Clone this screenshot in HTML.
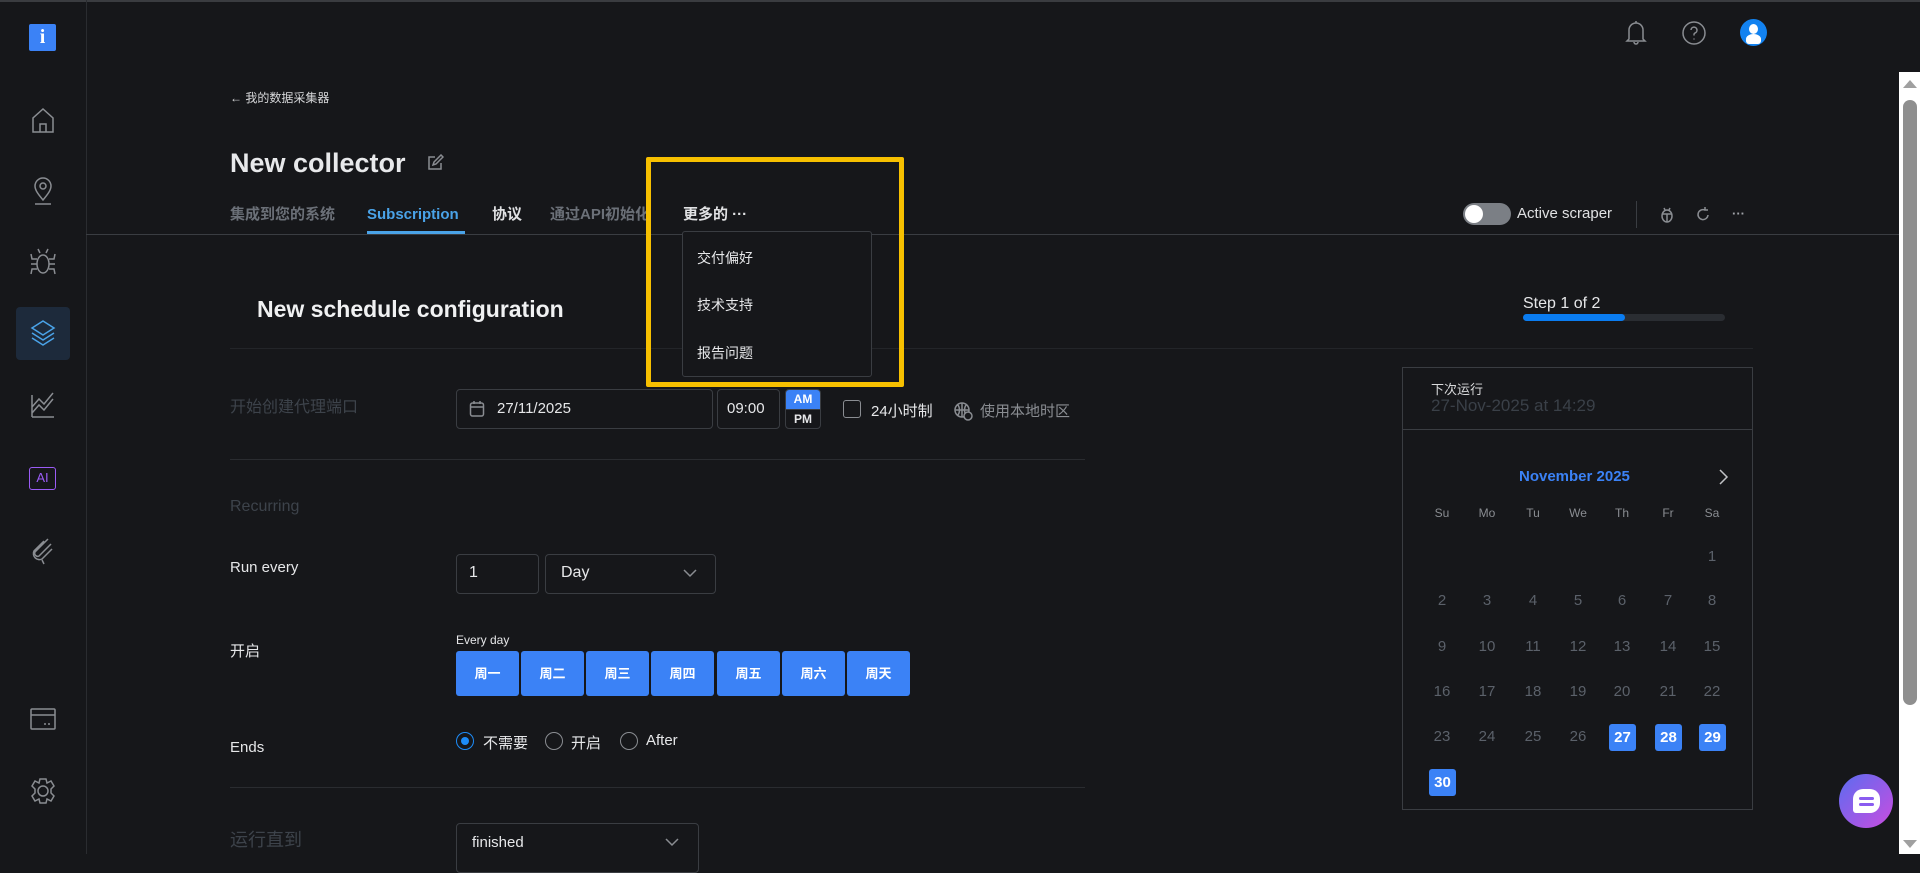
<!DOCTYPE html>
<html><head><meta charset="utf-8"><style>
*{margin:0;padding:0;box-sizing:border-box}
body{width:1920px;height:854px;background:#16171a;overflow:hidden;position:relative;font-family:"Liberation Sans","Noto Sans CJK SC",sans-serif;color:#e6e7e9}
.a{position:absolute;white-space:nowrap}
.dim{color:#3d434b}
.tab{position:absolute;top:204px;font-size:15px;font-weight:bold;line-height:22px;height:22px;white-space:nowrap}
.box{position:absolute;border:1px solid #3a3d42;border-radius:4px}
.ic{position:absolute;fill:none;stroke:#8a8d92;stroke-width:1.5}
.day{position:absolute;top:651px;width:63px;height:45px;background:#3b82f6;border-radius:3px;color:#fff;font-size:13px;font-weight:bold;text-align:center;line-height:45px}
.cn{position:absolute;width:40px;text-align:center;font-size:15px;color:#5b616a;transform:translate(-20px,-9px)}
.sel{position:absolute;width:27px;height:27px;background:#3b82f6;border-radius:3px;color:#fff;font-weight:bold;font-size:15px;text-align:center;line-height:27px;transform:translate(-13px,-13px)}
.radio{position:absolute;width:18px;height:18px;border:1px solid #8a8d92;border-radius:50%;top:732px}
</style></head><body>
<div class="a" style="left:0;top:0;width:1920px;height:2px;background:#3a3c40"></div>
<div class="a" style="left:86px;top:0;width:1px;height:854px;background:#2a2c30"></div>
<div class="a" style="left:29px;top:24px;width:27px;height:27px;background:#3b82f6;border-radius:2px;color:#fff;font:bold 20px 'Liberation Serif',serif;text-align:center;line-height:27px">i</div>
<svg class="ic" style="left:29px;top:106px" width="28" height="28" viewBox="0 0 28 28"><path d="M4 26V12L14 3l10 9v14zM11 26v-8h6v8"/></svg>
<svg class="ic" style="left:30px;top:176px" width="26" height="30" viewBox="0 0 26 30"><path d="M13 24c-5-6-8-10-8-14a8 8 0 0 1 16 0c0 4-3 8-8 14z"/><circle cx="13" cy="10" r="3"/><path d="M5 28h16"/></svg>
<svg class="ic" style="left:29px;top:247px" width="28" height="30" viewBox="0 0 28 30"><ellipse cx="14" cy="17" rx="6" ry="9"/><path d="M8 12H3L2 7M8 17H2M8 22H3l-1 5M20 12h5l1-5M20 17h6M20 22h5l1 5M11 6 9 2M17 6l2-4"/></svg>
<div class="a" style="left:16px;top:307px;width:54px;height:53px;background:#1d2a3b;border-radius:4px"></div>
<svg class="ic" style="left:29px;top:318px;stroke:#4aa3e8" width="28" height="32" viewBox="0 0 28 32"><path d="M14 3 3 10l11 7 11-7zM3 15l11 7 11-7M3 20l11 7 11-7"/></svg>
<svg class="ic" style="left:30px;top:391px" width="26" height="28" viewBox="0 0 26 28"><path d="M2 26h22M2 22l7-8 5 5 9-11M2 16l7-8 5 5 9-11M2 4v22"/></svg>
<div class="a" style="left:29px;top:467px;width:27px;height:23px;border:1.5px solid #9b5cf6;border-radius:3px;color:#9b5cf6;font-size:13px;text-align:center;line-height:20px">AI</div>
<svg class="ic" style="left:30px;top:536px" width="26" height="30" viewBox="0 0 26 30"><path d="M18 3 5 16a3 3 0 0 0 4 4L21 8M14 5 4 15a6 6 0 0 0 8 8l10-10M12 24l2 4"/></svg>
<svg class="ic" style="left:29px;top:706px" width="28" height="26" viewBox="0 0 28 26"><rect x="2" y="3" width="24" height="20" rx="1"/><path d="M2 9h24M15 18h2M19 18h2"/></svg>
<svg class="ic" style="left:29px;top:777px" width="28" height="28" viewBox="0 0 28 28"><path d="M11 2h6l1 4 4-2 3 5-3 3v4l3 3-3 5-4-2-1 4h-6l-1-4-4 2-3-5 3-3v-4L3 9l3-5 4 2z"/><circle cx="14" cy="14" r="5"/></svg>
<svg class="ic" style="left:1624px;top:20px" width="24" height="26" viewBox="0 0 24 26"><path d="M5 19V10a7 7 0 0 1 14 0v9l2 2H3zM12 3V1M10 22a2 2 0 0 0 4 0"/></svg>
<svg class="ic" style="left:1681px;top:20px" width="26" height="26" viewBox="0 0 26 26"><circle cx="13" cy="13" r="11"/><path d="M10 10a3 3 0 1 1 4 3c-1 .5-1 1-1 2.5M13 18.5v1"/></svg>
<div class="a" style="left:1740px;top:19px;width:27px;height:27px;background:#1282f0;border-radius:50%;overflow:hidden"><div class="a" style="left:9px;top:5px;width:9px;height:10px;background:#fff;border-radius:50%"></div><div class="a" style="left:6px;top:15px;width:15px;height:10px;background:#fff;border-radius:50% 50% 3px 3px"></div></div>
<div class="a" style="left:230px;top:89px;font-size:12px;color:#d8d9db">← 我的数据采集器</div>
<div class="a" style="left:230px;top:148px;font-size:27px;font-weight:bold;color:#e8e9eb">New collector</div>
<svg class="ic" style="left:426px;top:154px" width="18" height="18" viewBox="0 0 18 18"><path d="M9 3H3v12h12V9M7 11l1-3 7-7 2 2-7 7z"/></svg>
<div class="tab" style="left:230px;color:#6b7078">集成到您的系统</div>
<div class="tab" style="left:367px;color:#4aa3e8">Subscription</div>
<div class="a" style="left:367px;top:231px;width:98px;height:3px;background:#4aa3e8"></div>
<div class="tab" style="left:492px;color:#e0e1e3">协议</div>
<div class="tab" style="left:550px;color:#6b7078">通过API初始化</div>
<div class="tab" style="left:683px;color:#e0e1e3">更多的 ···</div>
<div class="a" style="left:86px;top:234px;width:1813px;height:1px;background:#3a3d42"></div>
<div class="a" style="left:1463px;top:203px;width:48px;height:22px;background:#7b7f85;border-radius:11px"><div class="a" style="left:2px;top:2px;width:18px;height:18px;background:#fff;border-radius:50%"></div></div>
<div class="a" style="left:1517px;top:203px;font-size:15px;line-height:22px;color:#e0e1e3">Active scraper</div>
<div class="a" style="left:1636px;top:201px;width:1px;height:27px;background:#3a3d42"></div>
<svg class="ic" style="left:1659px;top:205px" width="16" height="18" viewBox="0 0 16 18"><ellipse cx="8" cy="11" rx="5" ry="6"/><path d="M3 9h10M8 9v8M5 3l1 2M11 3l-1 2"/></svg>
<svg class="ic" style="left:1695px;top:206px" width="16" height="16" viewBox="0 0 16 16"><path d="M13 9a5 5 0 1 1-3-5M10 1v3h3"/></svg>
<div class="a" style="left:1732px;top:206px;font-size:13px;color:#a0a3a8;font-weight:bold">···</div>
<div class="a" style="left:257px;top:296px;font-size:23px;font-weight:bold;color:#f0f1f2">New schedule configuration</div>
<div class="a" style="left:1523px;top:295px;font-size:16px;color:#e6e7e9">Step 1 of 2</div>
<div class="a" style="left:1523px;top:314px;width:202px;height:7px;background:#2a2d32;border-radius:4px"><div style="width:102px;height:7px;background:#0a7cf0;border-radius:4px"></div></div>
<div class="a" style="left:230px;top:348px;width:1523px;height:1px;background:#232529"></div>
<div class="a dim" style="left:230px;top:393px;font-size:16px">开始创建代理端口</div>
<div class="box" style="left:456px;top:389px;width:257px;height:40px"></div>
<svg class="ic" style="left:469px;top:400px" width="16" height="18" viewBox="0 0 16 18"><rect x="1.5" y="3" width="13" height="13" rx="2"/><path d="M1.5 7h13M5 1v3M11 1v3"/></svg>
<div class="a" style="left:497px;top:400px;font-size:15px">27/11/2025</div>
<div class="box" style="left:717px;top:389px;width:63px;height:40px"></div>
<div class="a" style="left:727px;top:400px;font-size:15px">09:00</div>
<div class="box" style="left:785px;top:389px;width:36px;height:40px;overflow:hidden"><div style="height:19px;background:#3b82f6;color:#fff;font-size:12px;font-weight:bold;text-align:center;line-height:19px">AM</div><div style="font-size:12px;font-weight:bold;text-align:center;line-height:19px;border-top:1px solid #3a3d42">PM</div></div>
<div class="a" style="left:843px;top:400px;width:18px;height:18px;border:1.5px solid #8a8d92;border-radius:3px"></div>
<div class="a" style="left:871px;top:400px;font-size:15px">24小时制</div>
<svg class="ic" style="left:953px;top:401px" width="20" height="20" viewBox="0 0 20 20"><circle cx="9" cy="9" r="7"/><path d="M2 9h14M9 2v14M5 4c2 3 2 7 0 10M13 4c-2 3-2 7 0 10"/><circle cx="15" cy="15" r="4" fill="#16171a"/></svg>
<div class="a" style="left:980px;top:400px;font-size:15px;color:#8a8d92">使用本地时区</div>
<div class="a" style="left:230px;top:459px;width:855px;height:1px;background:#2a2c30"></div>
<div class="a dim" style="left:230px;top:498px;font-size:16px">Recurring</div>
<div class="a" style="left:230px;top:559px;font-size:15px">Run every</div>
<div class="box" style="left:456px;top:554px;width:83px;height:40px"></div>
<div class="a" style="left:469px;top:564px;font-size:16px">1</div>
<div class="box" style="left:545px;top:554px;width:171px;height:40px"></div>
<div class="a" style="left:561px;top:564px;font-size:16px">Day</div>
<svg class="ic" style="left:682px;top:567px" width="16" height="12" viewBox="0 0 16 12"><path d="M2 3l6 6 6-6"/></svg>
<div class="a" style="left:230px;top:640px;font-size:15px">开启</div>
<div class="a" style="left:456px;top:633px;font-size:12px">Every day</div>
<div class="day" style="left:456px">周一</div><div class="day" style="left:521px">周二</div><div class="day" style="left:586px">周三</div><div class="day" style="left:651px">周四</div><div class="day" style="left:717px">周五</div><div class="day" style="left:782px">周六</div><div class="day" style="left:847px">周天</div>
<div class="a" style="left:230px;top:739px;font-size:15px">Ends</div>
<div class="radio" style="left:456px;border:1.5px solid #1d8cf8"><div class="a" style="left:4px;top:4px;width:8px;height:8px;background:#1d8cf8;border-radius:50%"></div></div>
<div class="a" style="left:483px;top:732px;font-size:15px">不需要</div>
<div class="radio" style="left:545px"></div><div class="a" style="left:571px;top:732px;font-size:15px">开启</div>
<div class="radio" style="left:620px"></div><div class="a" style="left:646px;top:732px;font-size:15px">After</div>
<div class="a" style="left:230px;top:787px;width:855px;height:1px;background:#2a2c30"></div>
<div class="a dim" style="left:230px;top:826px;font-size:18px">运行直到</div>
<div class="box" style="left:456px;top:823px;width:243px;height:50px"></div>
<div class="a" style="left:472px;top:834px;font-size:15px">finished</div>
<svg class="ic" style="left:664px;top:836px" width="16" height="12" viewBox="0 0 16 12"><path d="M2 3l6 6 6-6"/></svg>
<div class="a" style="left:1402px;top:367px;width:351px;height:443px;border:1px solid #3a3d42"></div>
<div class="a" style="left:1402px;top:429px;width:351px;height:1px;background:#3a3d42"></div>
<div class="a" style="left:1431px;top:379px;font-size:13px;color:#d8d9db">下次运行</div>
<div class="a" style="left:1431px;top:396px;font-size:17px;color:#3a4048">27-Nov-2025 at 14:29</div>
<div class="a" style="left:1519px;top:468px;font-size:15px;font-weight:bold;color:#3b82f6">November 2025</div>
<svg class="ic" style="left:1716px;top:468px;stroke:#c0c2c5" width="14" height="18" viewBox="0 0 14 18"><path d="M4 2l7 7-7 7"/></svg>
<div class="cn" style="left:1442px;top:515px;font-size:12px;color:#8a8d92">Su</div><div class="cn" style="left:1487px;top:515px;font-size:12px;color:#8a8d92">Mo</div><div class="cn" style="left:1533px;top:515px;font-size:12px;color:#8a8d92">Tu</div><div class="cn" style="left:1578px;top:515px;font-size:12px;color:#8a8d92">We</div><div class="cn" style="left:1622px;top:515px;font-size:12px;color:#8a8d92">Th</div><div class="cn" style="left:1668px;top:515px;font-size:12px;color:#8a8d92">Fr</div><div class="cn" style="left:1712px;top:515px;font-size:12px;color:#8a8d92">Sa</div>
<div class="cn" style="left:1712px;top:557px">1</div>
<div class="cn" style="left:1442px;top:601px">2</div><div class="cn" style="left:1487px;top:601px">3</div><div class="cn" style="left:1533px;top:601px">4</div><div class="cn" style="left:1578px;top:601px">5</div><div class="cn" style="left:1622px;top:601px">6</div><div class="cn" style="left:1668px;top:601px">7</div><div class="cn" style="left:1712px;top:601px">8</div>
<div class="cn" style="left:1442px;top:647px">9</div><div class="cn" style="left:1487px;top:647px">10</div><div class="cn" style="left:1533px;top:647px">11</div><div class="cn" style="left:1578px;top:647px">12</div><div class="cn" style="left:1622px;top:647px">13</div><div class="cn" style="left:1668px;top:647px">14</div><div class="cn" style="left:1712px;top:647px">15</div>
<div class="cn" style="left:1442px;top:692px">16</div><div class="cn" style="left:1487px;top:692px">17</div><div class="cn" style="left:1533px;top:692px">18</div><div class="cn" style="left:1578px;top:692px">19</div><div class="cn" style="left:1622px;top:692px">20</div><div class="cn" style="left:1668px;top:692px">21</div><div class="cn" style="left:1712px;top:692px">22</div>
<div class="cn" style="left:1442px;top:737px">23</div><div class="cn" style="left:1487px;top:737px">24</div><div class="cn" style="left:1533px;top:737px">25</div><div class="cn" style="left:1578px;top:737px">26</div>
<div class="sel" style="left:1622px;top:737px">27</div><div class="sel" style="left:1668px;top:737px">28</div><div class="sel" style="left:1712px;top:737px">29</div>
<div class="sel" style="left:1442px;top:782px">30</div>
<div class="a" style="left:1899px;top:72px;width:21px;height:782px;background:#fff"></div>
<div class="a" style="left:1903px;top:80px;width:0;height:0;border-left:7px solid transparent;border-right:7px solid transparent;border-bottom:8px solid #a0a0a0"></div>
<div class="a" style="left:1903px;top:100px;width:14px;height:605px;background:#8f8f8f;border-radius:7px"></div>
<div class="a" style="left:1903px;top:840px;width:0;height:0;border-left:7px solid transparent;border-right:7px solid transparent;border-top:8px solid #a0a0a0"></div>
<div class="a" style="left:1839px;top:774px;width:54px;height:54px;border-radius:50%;background:linear-gradient(135deg,#5b6cf0,#c94de0)"><div class="a" style="left:14px;top:15px;width:27px;height:24px;background:#fff;border-radius:10px 10px 10px 3px"></div><div class="a" style="left:20px;top:23px;width:15px;height:3px;background:#8a5cf0;border-radius:2px"></div><div class="a" style="left:20px;top:29px;width:15px;height:3px;background:#8a5cf0;border-radius:2px"></div></div>
<div class="a" style="left:682px;top:231px;width:190px;height:146px;background:#16171a;border:1px solid #3a3d42;border-radius:3px"></div>
<div class="a" style="left:697px;top:248px;font-size:14px">交付偏好</div>
<div class="a" style="left:697px;top:295px;font-size:14px">技术支持</div>
<div class="a" style="left:697px;top:343px;font-size:14px">报告问题</div>
<div class="a" style="left:646px;top:157px;width:258px;height:230px;border:5px solid #f7c000;border-radius:2px"></div>
</body></html>
